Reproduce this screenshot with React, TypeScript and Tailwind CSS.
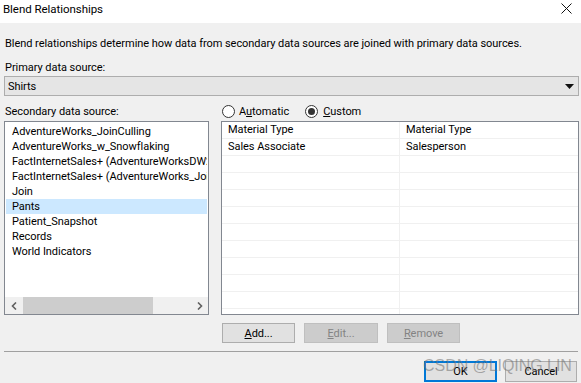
import React from "react";

const items = [
  "AdventureWorks_JoinCulling",
  "AdventureWorks_w_Snowflaking",
  "FactInternetSales+ (AdventureWorksDW2012)",
  "FactInternetSales+ (AdventureWorks_JoinCulling)",
  "Join",
  "Pants",
  "Patient_Snapshot",
  "Records",
  "World Indicators",
];

const rows: [string, string][] = [
  ["Material Type", "Material Type"],
  ["Sales Associate", "Salesperson"],
  ["", ""],
  ["", ""],
  ["", ""],
  ["", ""],
  ["", ""],
  ["", ""],
  ["", ""],
  ["", ""],
  ["", ""],
  ["", ""],
];

function Radio({ checked }: { checked: boolean }) {
  return (
    <span className="w-[13px] h-[13px] rounded-full border border-[#333333] bg-white flex items-center justify-center shrink-0">
      {checked && <span className="w-[7px] h-[7px] rounded-full bg-[#333333]" />}
    </span>
  );
}

export default function App() {
  return (
    <div className="relative w-[581px] h-[383px] bg-[#f0f0f0] overflow-hidden text-[11px] tracking-[-0.05px] text-black font-['Roboto',sans-serif]">
      {/* Title bar */}
      <div className="h-[23px] bg-white flex items-center justify-between pl-[3px] pr-[9px]">
        <span className="leading-[15px] -mt-[5px] text-[11.5px]">Blend Relationships</span>
        <svg width="11" height="11" viewBox="0 0 11 11" className="-mt-[6px]">
          <path d="M0.5 0.5 L10.5 10.5 M10.5 0.5 L0.5 10.5" stroke="#111" strokeWidth="1" />
        </svg>
      </div>

      <div className="pl-[4px] pr-[2px]">
        <div className="mt-[13px] leading-[15px] pl-[1px] whitespace-nowrap">
          Blend relationships determine how data from secondary data sources are joined with primary data sources.
        </div>
        <div className="mt-[9px] leading-[15px] pl-[1px]">Primary data source:</div>
        <div className="mt-[1px] h-[20px] border border-[#adadad] bg-[#e5e5e5] flex items-center justify-between pl-[3px] pr-[4px]">
          <span className="leading-[15px]">Shirts</span>
          <svg width="9" height="5" viewBox="0 0 9 5">
            <path d="M0 0 H9 L4.5 5 Z" fill="#111" />
          </svg>
        </div>

        <div className="mt-[8px] grid grid-cols-[205px_358px] gap-x-[12px]">
          <div className="h-[17px] leading-[15px] pl-[1px]">Secondary data source:</div>
          <div className="h-[17px] flex items-start pl-[1px]">
            <div className="flex items-center gap-[4px] h-[15px]">
              <Radio checked={false} />
              <span className="leading-[15px]">
                A<span className="underline">u</span>tomatic
              </span>
            </div>
            <div className="flex items-center gap-[5px] h-[15px] ml-[16px]">
              <Radio checked={true} />
              <span className="leading-[15px]">
                <span className="underline">C</span>ustom
              </span>
            </div>
          </div>

          {/* List box */}
          <div className="h-[194px] border border-[#828790] bg-white flex flex-col overflow-hidden">
            <div className="flex-1 pt-[2px] overflow-hidden">
              {items.map((it) => (
                <div
                  key={it}
                  className={
                    "h-[15px] leading-[15px] mx-[1px] pl-[6px] whitespace-nowrap overflow-hidden " +
                    (it === "Pants" ? "bg-[#cce8ff]" : "")
                  }
                >
                  {it}
                </div>
              ))}
            </div>
            <div className="h-[17px] bg-[#f0f0f0] flex items-center">
              <div className="w-[17px] h-[17px] flex items-center justify-center">
                <svg width="6" height="8" viewBox="0 0 6 8">
                  <path d="M5 0.5 L1.5 4 L5 7.5" stroke="#606060" strokeWidth="1.6" fill="none" />
                </svg>
              </div>
              <div className="flex-1 h-[17px] flex items-center">
                <div className="w-[130px] h-[17px] bg-[#cdcdcd] ml-[1px]" />
              </div>
              <div className="w-[17px] h-[17px] flex items-center justify-center">
                <svg width="6" height="8" viewBox="0 0 6 8">
                  <path d="M1 0.5 L4.5 4 L1 7.5" stroke="#606060" strokeWidth="1.6" fill="none" />
                </svg>
              </div>
            </div>
          </div>

          {/* Grid */}
          <div className="h-[194px] border border-[#828790] bg-white overflow-hidden">
            {rows.map((r, i) => (
              <div key={i} className="h-[17px] border-b border-[#f0f0f0] flex">
                <div className="w-[178px] border-r border-[#f0f0f0] pl-[6px] leading-[16px] whitespace-nowrap">
                  {r[0]}
                </div>
                <div className="flex-1 pl-[6px] leading-[16px] whitespace-nowrap">{r[1]}</div>
              </div>
            ))}
          </div>
        </div>

        {/* Grid buttons */}
        <div className="mt-[8px] flex pl-[218px] gap-[9px]">
          <button className="w-[73px] h-[20px] border border-[#adadad] bg-[#e1e1e1] leading-[15px]">
            <span className="underline">A</span>dd...
          </button>
          <button className="w-[74px] h-[20px] border border-[#bfbfbf] bg-[#cccccc] text-[#838383] leading-[15px]">
            <span className="underline">E</span>dit...
          </button>
          <button className="w-[73px] h-[20px] border border-[#bfbfbf] bg-[#cccccc] text-[#838383] leading-[15px]">
            <span className="underline">R</span>emove
          </button>
        </div>

        <div className="mt-[8px] h-[1px] bg-[#a0a0a0] mr-[1px]" />

        <div className="mt-[9px] flex justify-end gap-[8px] pr-[2px]">
          <button className="w-[73px] h-[21px] border-2 border-[#0078d7] bg-[#e1e1e1] leading-[15px]">OK</button>
          <button className="w-[72px] h-[21px] border border-[#adadad] bg-[#e1e1e1] leading-[15px]">Cancel</button>
        </div>
      </div>

      {/* Watermark */}
      <div className="absolute left-[423px] top-[356px] text-[16px] leading-[20px] text-[rgba(110,110,110,0.55)] whitespace-nowrap font-['Liberation_Sans',Arial,sans-serif]">
        CSDN @LIQING LIN
      </div>
    </div>
  );
}
